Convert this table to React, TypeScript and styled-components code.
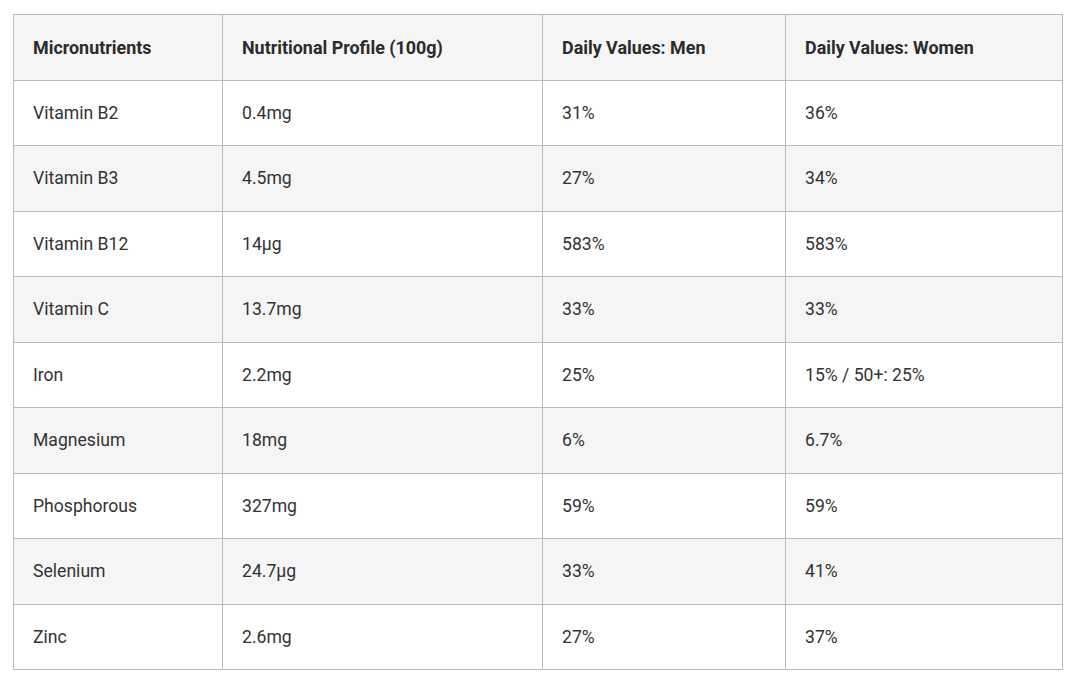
import React from "react";
import styled, { createGlobalStyle } from "styled-components";

const Global = createGlobalStyle`
  html, body { margin: 0; padding: 0; background: #fff; }
  body { font-family: Roboto, "Liberation Sans", Arial, sans-serif; color: #333; }
`;

const Wrap = styled.div`
  padding: 14px 0 0 13px;
`;

const Table = styled.table`
  border-collapse: collapse;
  width: 1049px;
  table-layout: fixed;
  font-size: 17.6px;
  color: #333;
`;

const Row = styled.tr<{ $shade?: boolean }>`
  height: 65.5px;
  background: ${(p) => (p.$shade ? "#f5f5f5" : "#fff")};
`;

const Th = styled.th<{ $w: number }>`
  box-sizing: border-box;
  width: ${(p) => p.$w}px;
  border: 1px solid #bbb;
  padding: 0 19px;
  text-align: left;
  font-weight: 700;
  font-size: 17.9px;
  color: #2b2b2b;
`;

const Td = styled.td`
  border: 1px solid #bbb;
  padding: 0 19px;
  text-align: left;
  font-weight: 400;
`;

const head = [
  ["Micronutrients", 209],
  ["Nutritional Profile (100g)", 320],
  ["Daily Values: Men", 243],
  ["Daily Values: Women", 277],
] as const;

const rows = [
  ["Vitamin B2", "0.4mg", "31%", "36%"],
  ["Vitamin B3", "4.5mg", "27%", "34%"],
  ["Vitamin B12", "14µg", "583%", "583%"],
  ["Vitamin C", "13.7mg", "33%", "33%"],
  ["Iron", "2.2mg", "25%", "15% / 50+: 25%"],
  ["Magnesium", "18mg", "6%", "6.7%"],
  ["Phosphorous", "327mg", "59%", "59%"],
  ["Selenium", "24.7µg", "33%", "41%"],
  ["Zinc", "2.6mg", "27%", "37%"],
];

export default function App() {
  return (
    <Wrap>
      <Global />
      <Table>
        <thead>
          <Row $shade>
            {head.map(([t, w]) => (
              <Th key={t} $w={w}>
                {t}
              </Th>
            ))}
          </Row>
        </thead>
        <tbody>
          {rows.map((r, i) => (
            <Row key={r[0]} $shade={i % 2 === 1}>
              {r.map((c, j) => (
                <Td key={j}>{c}</Td>
              ))}
            </Row>
          ))}
        </tbody>
      </Table>
    </Wrap>
  );
}
